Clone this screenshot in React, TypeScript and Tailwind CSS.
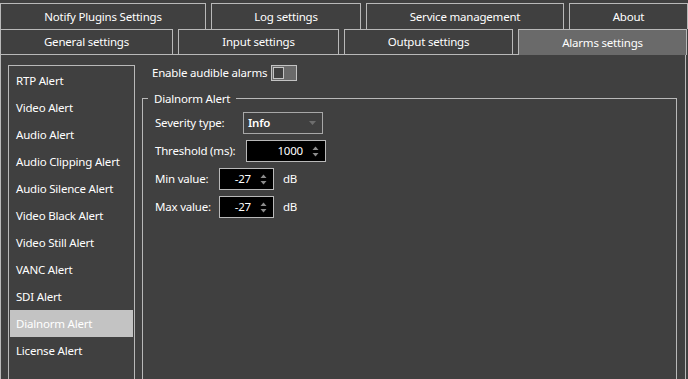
import { useState } from 'react'

const topTabs = [
  { label: 'Notify Plugins Settings', w: 'w-[206px]' },
  { label: 'Log settings', w: 'w-[150px]' },
  { label: 'Service management', w: 'w-[198px]' },
  { label: 'About', w: 'w-[119px]' },
]

const mainTabs = [
  { label: 'General settings', w: 'w-[173px]' },
  { label: 'Input settings', w: 'w-[161px]' },
  { label: 'Output settings', w: 'w-[169px]' },
  { label: 'Alarms settings', w: 'w-[169px]' },
]

const alerts = [
  'RTP Alert',
  'Video Alert',
  'Audio Alert',
  'Audio Clipping Alert',
  'Audio Silence Alert',
  'Video Black Alert',
  'Video Still Alert',
  'VANC Alert',
  'SDI Alert',
  'Dialnorm Alert',
  'License Alert',
]

function SpinArrows() {
  return (
    <svg width="7" height="11" viewBox="0 0 7 11" className="shrink-0">
      <path d="M3.5 0.5 L6.5 4 L0.5 4 Z" fill="#8c8c8c" />
      <path d="M0.5 7 L6.5 7 L3.5 10.5 Z" fill="#8c8c8c" />
    </svg>
  )
}

function SpinBox({ value, w }: { value: string; w: string }) {
  return (
    <div className={`flex h-[22px] ${w} items-center justify-end gap-[9px] border border-[#b9b9b9] bg-black pr-[6px]`}>
      <span className="text-white">{value}</span>
      <SpinArrows />
    </div>
  )
}

export default function App() {
  const [selected, setSelected] = useState('Dialnorm Alert')
  const [audible, setAudible] = useState(false)

  return (
    <div
      className="h-[379px] w-[688px] overflow-hidden bg-[#404040] text-[11.5px] tracking-[-0.2px] text-white"
      style={{ fontFamily: '"Noto Sans", "Open Sans", Arial, sans-serif' }}
    >
      {/* Tab rows */}
      <div className="flex gap-[5px] pt-[3px]">
        {topTabs.map(t => (
          <div
            key={t.label}
            className={`flex h-[26px] ${t.w} items-center justify-center border-x border-t border-[#b9b9b9]`}
          >
            {t.label}
          </div>
        ))}
      </div>
      <div className="relative z-10 flex gap-[5px]">
        {mainTabs.map(t => {
          const active = t.label === 'Alarms settings'
          return (
            <div
              key={t.label}
              className={`flex ${t.w} items-center justify-center border-x border-t border-[#b9b9b9] ${
                active ? 'mb-[-1px] h-[26px] bg-[#6a6a6a]' : 'h-[25px]'
              }`}
            >
              {t.label}
            </div>
          )
        })}
      </div>

      {/* Pane */}
      <div className="flex h-[400px] w-[686px] gap-[7px] border-l border-r border-t border-[#b9b9b9] pl-[7px] pt-[10px]">
        <div className="flex h-[380px] w-[127px] flex-col border border-[#b9b9b9] p-[1px]">
          {alerts.map(a => (
            <div
              key={a}
              onClick={() => setSelected(a)}
              className={`flex h-[27px] shrink-0 items-center pl-[6px] ${
                selected === a ? 'bg-[#c3c3c3]' : ''
              }`}
            >
              {a}
            </div>
          ))}
        </div>

        <div className="flex flex-1 flex-col pr-[8px]">
          <div className="flex h-[16px] items-center pl-[10px]">
            <span className="w-[119px]">Enable audible alarms</span>
            <button
              onClick={() => setAudible(!audible)}
              className={`flex h-[16px] w-[26px] items-center border border-[#c3c3c3] bg-[#6a6a6a] p-[1px] ${
                audible ? 'justify-end' : 'justify-start'
              }`}
            >
              <span className="h-[12px] w-[11px] border border-[#c3c3c3] bg-[#404040]" />
            </button>
          </div>

          {/* Group box */}
          <div className="relative mt-[17px] h-[300px] border border-[#b9b9b9] pl-[12px] pt-[13px]">
            <span className="absolute left-[5px] top-[-9px] bg-[#404040] px-[6px] leading-[17px]">
              Dialnorm Alert
            </span>
            <div className="flex flex-col gap-[6px]">
              <div className="flex h-[22px] items-center">
                <span className="w-[88px]">Severity type:</span>
                <div className="flex h-[22px] w-[80px] items-center justify-between border border-[#a8a8a8] pl-[4px] pr-[6px]">
                  <span className="font-semibold">Info</span>
                  <svg width="7" height="4" viewBox="0 0 7 4">
                    <path d="M0 0 L7 0 L3.5 4 Z" fill="#6e6e6e" />
                  </svg>
                </div>
              </div>
              <div className="flex h-[22px] items-center">
                <span className="w-[91px]">Threshold (ms):</span>
                <SpinBox value="1000" w="w-[80px]" />
              </div>
              <div className="flex h-[22px] items-center">
                <span className="w-[64px]">Min value:</span>
                <SpinBox value="-27" w="w-[55px]" />
                <span className="ml-[9px]">dB</span>
              </div>
              <div className="flex h-[22px] items-center">
                <span className="w-[64px]">Max value:</span>
                <SpinBox value="-27" w="w-[55px]" />
                <span className="ml-[9px]">dB</span>
              </div>
            </div>
          </div>
        </div>
      </div>
    </div>
  )
}
